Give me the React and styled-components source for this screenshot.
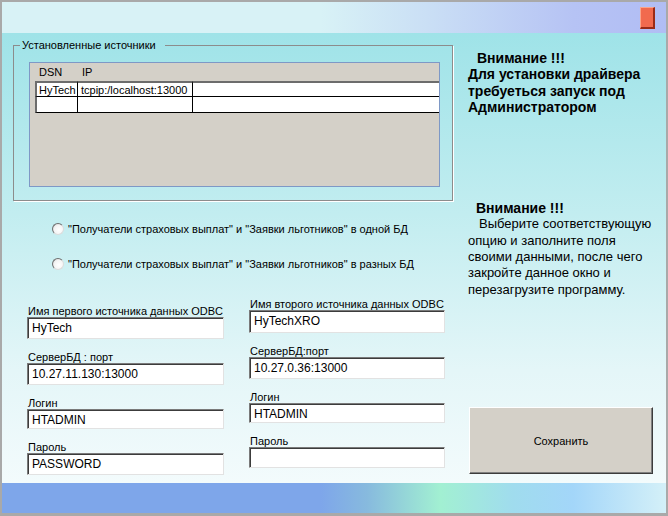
import React from 'react'
import styled, { createGlobalStyle } from 'styled-components'

const GlobalStyle = createGlobalStyle`
  html, body {
    margin: 0;
    padding: 0;
    background: #fff;
  }
  body {
    font-family: "Liberation Sans", Arial, sans-serif;
    font-size: 11px;
    color: #000;
  }
`

const Window = styled.div`
  width: 668px;
  height: 516px;
  box-sizing: border-box;
  display: flex;
  flex-direction: column;
  border: solid #a9a9a9;
  border-width: 2px 2px 3px 2px;
`

const TitleBar = styled.div`
  height: 31px;
  flex-shrink: 0;
  display: flex;
  justify-content: flex-end;
  align-items: center;
  padding-right: 11px;
  background: linear-gradient(90deg, #d8f2f6 0%, #d8f2f6 48%, #cadff5 64%, #b6c3f4 86%, #b1bdf4 100%);
`

const CloseButton = styled.div`
  width: 15px;
  height: 22px;
  box-sizing: border-box;
  background: #f16a4e;
  border: solid;
  border-width: 1px 2px 2px 1px;
  border-color: #f9a48b #9a2b17 #9a2b17 #f9a48b;
`

const Body = styled.div`
  flex: 1;
  display: grid;
  grid-template-columns: 466px 1fr;
  background: linear-gradient(180deg, #9fe3e8 0%, #c2edf0 40%, #e4f6f8 75%, #f3fbfc 100%);
`

const LeftCol = styled.div`
  padding: 5px 0 0 11px;
`

const GroupBox = styled.fieldset`
  margin: 0;
  padding: 0;
  width: 440px;
  box-sizing: border-box;
  border: 1px solid #8c8c8c;
  box-shadow: 1px 1px 0 #fff;
`

const Legend = styled.legend`
  margin-left: 6px;
  padding: 0 9px 0 2px;
  font-size: 11px;
  line-height: 14px;
`

const GroupInner = styled.div`
  padding: 10px 12px 13px 15px;
`

const Grid = styled.div`
  width: 411px;
  height: 125px;
  box-sizing: border-box;
  border: 1px solid #7e98c6;
  background: #d4d0c8;
  padding-left: 5px;
`

const GridRow = styled.div`
  display: grid;
  grid-template-columns: 43px 115px 1fr;
  height: ${({ $h }) => $h}px;
`

const HeadCell = styled.div`
  padding-left: 4px;
  line-height: 18px;
`

const Cell = styled.div`
  box-sizing: border-box;
  background: #fff;
  border-right: ${({ $last }) => ($last ? 'none' : '1px solid #000')};
  border-bottom: 1px solid #000;
  border-top: ${({ $first }) => ($first ? '2px solid #6c6c6c' : 'none')};
  border-left: ${({ $lead }) => ($lead ? '2px solid #6c6c6c' : 'none')};
  padding-left: ${({ $lead }) => ($lead ? 2 : 3)}px;
  line-height: 14px;
  white-space: nowrap;
  overflow: hidden;
`

const RadioGroup = styled.div`
  display: flex;
  flex-direction: column;
  gap: 21px;
  margin-top: 21px;
  padding-left: 39px;
`

const RadioRow = styled.label`
  display: flex;
  align-items: center;
  gap: 4px;
  height: 14px;
`

const RadioDot = styled.span`
  width: 12px;
  height: 12px;
  box-sizing: border-box;
  border-radius: 50%;
  border: 1px solid;
  border-color: #6e6e6e #dcdcdc #dcdcdc #6e6e6e;
  background: radial-gradient(circle at 60% 60%, #ffffff 0%, #f4f4f4 55%, #c8c8c8 100%);
`

const FieldsGrid = styled.div`
  display: grid;
  grid-template-columns: 197px 196px;
  column-gap: 25px;
  align-items: start;
  margin-top: 27px;
  padding-left: 14px;
`

const FieldCol = styled.div`
  display: flex;
  flex-direction: column;
  gap: 12px;
  padding-top: ${({ $offset }) => $offset || 0}px;
`

const Field = styled.div`
  display: flex;
  flex-direction: column;
`

const FieldLabel = styled.div`
  height: 12px;
  line-height: 12px;
  padding-left: 1px;
  white-space: nowrap;
`

const TextBox = styled.div`
  height: ${({ $h }) => $h}px;
  box-sizing: border-box;
  background: #fff;
  border: 1px solid;
  border-color: #7a7a7a #e2e2e2 #e2e2e2 #7a7a7a;
  box-shadow: inset 1px 1px 0 #3c3c3c;
  padding: 3px 0 0 4px;
  font-size: 12px;
  line-height: 14px;
`

const RightCol = styled.div`
  display: flex;
  flex-direction: column;
  padding: 17px 0 9px 0;
`

const Note = styled.div`
  font-size: 13px;
  line-height: 16.3px;
  margin-top: ${({ $mt }) => $mt || 0}px;
`

const NoteLine = styled.div`
  font-weight: ${({ $bold }) => ($bold ? 700 : 400)};
  font-size: ${({ $bold }) => ($bold ? 14 : 13)}px;
  padding-left: ${({ $indent }) => $indent || 0}px;
  white-space: nowrap;
`

const SaveButton = styled.button`
  margin-top: auto;
  margin-left: 1px;
  width: 184px;
  height: 67px;
  box-sizing: border-box;
  background: #d4d0c8;
  border: 1px solid;
  border-color: #fff #3c3c3c #3c3c3c #fff;
  box-shadow: inset -1px -1px 0 #808080;
  font-family: inherit;
  font-size: 11px;
  color: #000;
  padding: 0;
`

const BottomBar = styled.div`
  height: 30px;
  flex-shrink: 0;
  background: linear-gradient(90deg, #7ea6ea 0%, #7ea6ea 48%, #87bade 55%, #a2f0d2 66%, #a0dcee 77%, #a3d6f9 86%, #d4f0f8 100%);
`

const leftFields = [
  { label: 'Имя первого источника данных ODBC', value: 'HyTech', h: 22 },
  { label: 'СерверБД : порт', value: '10.27.11.130:13000', h: 22 },
  { label: 'Логин', value: 'HTADMIN', h: 20 },
  { label: 'Пароль', value: 'PASSWORD', h: 22 },
]

const rightFields = [
  { label: 'Имя второго источника данных ODBC', value: 'HyTechXRO', h: 23 },
  { label: 'СерверБД:порт', value: '10.27.0.36:13000', h: 22 },
  { label: 'Логин', value: 'HTADMIN', h: 20 },
  { label: 'Пароль', value: '', h: 21 },
]

const App = () => {
  return (
    <>
      <GlobalStyle />
      <Window>
        <TitleBar>
          <CloseButton />
        </TitleBar>
        <Body>
          <LeftCol>
            <GroupBox>
              <Legend>Установленные источники</Legend>
              <GroupInner>
                <Grid>
                  <GridRow $h={18}>
                    <HeadCell>DSN</HeadCell>
                    <HeadCell>IP</HeadCell>
                    <HeadCell />
                  </GridRow>
                  <GridRow $h={16}>
                    <Cell $first $lead>HyTech</Cell>
                    <Cell $first>tcpip:/localhost:13000</Cell>
                    <Cell $first $last />
                  </GridRow>
                  <GridRow $h={16}>
                    <Cell $lead />
                    <Cell />
                    <Cell $last />
                  </GridRow>
                </Grid>
              </GroupInner>
            </GroupBox>

            <RadioGroup>
              <RadioRow>
                <RadioDot />
                "Получатели страховых выплат" и "Заявки льготников" в одной БД
              </RadioRow>
              <RadioRow>
                <RadioDot />
                "Получатели страховых выплат" и "Заявки льготников" в разных БД
              </RadioRow>
            </RadioGroup>

            <FieldsGrid>
              <FieldCol $offset={7}>
                {leftFields.map((f) => (
                  <Field key={f.label}>
                    <FieldLabel>{f.label}</FieldLabel>
                    <TextBox $h={f.h}>{f.value}</TextBox>
                  </Field>
                ))}
              </FieldCol>
              <FieldCol>
                {rightFields.map((f) => (
                  <Field key={f.label}>
                    <FieldLabel>{f.label}</FieldLabel>
                    <TextBox $h={f.h}>{f.value}</TextBox>
                  </Field>
                ))}
              </FieldCol>
            </FieldsGrid>
          </LeftCol>

          <RightCol>
            <Note>
              <NoteLine $bold $indent={9}>Внимание !!!</NoteLine>
              <NoteLine $bold>Для установки драйвера</NoteLine>
              <NoteLine $bold>требуеться запуск под</NoteLine>
              <NoteLine $bold>Администратором</NoteLine>
            </Note>
            <Note $mt={85}>
              <NoteLine $bold $indent={8}>Внимание !!!</NoteLine>
              <NoteLine $indent={11}>Выберите соответствующую</NoteLine>
              <NoteLine>опцию и заполните поля</NoteLine>
              <NoteLine>своими данными, после чего</NoteLine>
              <NoteLine>закройте данное окно и</NoteLine>
              <NoteLine>перезагрузите программу.</NoteLine>
            </Note>
            <SaveButton>Сохранить</SaveButton>
          </RightCol>
        </Body>
        <BottomBar />
      </Window>
    </>
  )
}

export default App
